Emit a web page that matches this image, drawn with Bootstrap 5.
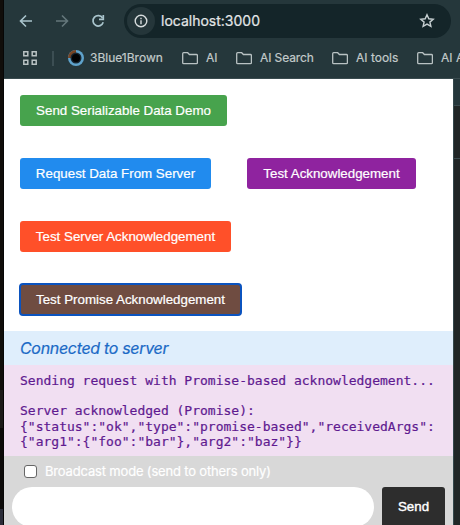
<!DOCTYPE html>
<html lang="en">
<head>
<meta charset="utf-8">
<meta name="viewport" content="width=device-width, initial-scale=1">
<title>localhost:3000</title>
<link href="https://cdn.jsdelivr.net/npm/bootstrap@5.3.0/dist/css/bootstrap.min.css" rel="stylesheet">
<style>
html, body { height: 525px; overflow: hidden; }
body { font-family: Inter, sans-serif; background: #25363a; }
.desk-left { width: 4px; height: 525px; background: linear-gradient(#100d0a 0 390px, #1c1a18 390px 428px, #0c0a09 428px 509px, #2a2c38 509px); border-right: 1px solid #060606; }
.browser { width: 456px; height: 525px; }
.chrome-head { height: 79px; background: #25373b; border-bottom: 1px solid #3a4b4f; color: #c7d0d2; }
.toolbar { height: 42px; padding-left: 14px; }
.nav-ico { width: 16px; height: 16px; margin-right: 20px; }
.nav-ico.last { margin-right: 18px; }
.address { width: 327px; height: 34px; background: #142529; padding-left: 3px; padding-right: 16px; }
.info-dot { width: 28px; height: 28px; background: #25363a; }
.url-text { font-size: 14px; line-height: 20px; color: #e3e6e7; margin-left: 6px; -webkit-text-stroke: .2px #e3e6e7; }
.bookmarks { height: 32px; padding-left: 19px; font-size: 12px; color: #c2caca; white-space: nowrap; -webkit-text-stroke: .2px #c2caca; }
.divider { width: 2px; height: 15px; background: #3c4e53; margin-left: 15px; margin-right: 14px; }
.folder { margin-right: 8px; }
.bm { flex-shrink: 0; }
.bm-first { width: 98px; padding-left: 6px; }
.bm-ai { width: 30px; }
.bm-search { width: 72px; letter-spacing: -.1px; }
.bm-tools { width: 61px; }
.page { width: 449px; height: 446px; background: #fff; }
.desk-right { width: 7px; height: 446px; background: linear-gradient(#25373b 0 26px, #3a4b4f 26px 27px, #202626 27px 79px, #3a4b4f 79px 80px, #202626 80px); border-left: 1px solid #34484c; }
.demo-buttons { height: 252px; padding: 16px 16px 0; row-gap: 32px; }
.pair { column-gap: 36px; }
.demo-btn { height: 31px; padding: 0; border: 0; border-radius: 3px; font: 13.333px/31px "Liberation Sans", Arial, sans-serif; color: #fff; text-align: center; white-space: nowrap; -webkit-text-stroke: .2px #fff; }
.demo-btn.green { width: 207px; background: #47a34d; }
.demo-btn.blue { width: 191px; background: #218bee; }
.demo-btn.purple { width: 169px; background: #8f239f; }
.demo-btn.orange { width: 211px; background: #ff5029; }
.demo-btn.brown { width: 221px; background: #6f4c41; outline: 2px solid #0b53bf; outline-offset: -1px; }
.status-line { height: 34px; padding: 0 16px; background: #dfeefc; color: #1b6ac6; font: italic 16px/34px Inter, sans-serif; letter-spacing: -.32px; -webkit-text-stroke: .2px #1b6ac6; }
.log { height: 91px; padding: 8px 16px 0; background: #f1dff2; color: #5f1a90; font: 13px/15.2px "DejaVu Sans Mono", monospace; white-space: pre; margin: 0; overflow: hidden; -webkit-text-stroke: .2px #5f1a90; }
.composer { height: 69px; background: #d8d8d8; }
.broadcast { height: 31px; padding-left: 20px; color: #fff; font-size: 13px; letter-spacing: -.17px; -webkit-text-stroke: .2px #fff; }
.broadcast input { width: 13px; height: 13px; margin: 0 8px 0 0; border: 1px solid #666; border-radius: 3px; background: #fff; appearance: none; }
.message-box { width: 362px; height: 40px; border: 0; border-radius: 20px; background: #fff; }
.send-btn { width: 63px; height: 40px; border: 0; border-radius: 3px; background: #2d2d2d; color: #fff; font: 13.333px/40px "Liberation Sans", Arial, sans-serif; padding: 0; -webkit-text-stroke: .4px #fff; }
</style>
</head>
<body class="d-flex m-0">
<div class="desk-left flex-shrink-0"></div>
<div class="browser flex-shrink-0">
  <header class="chrome-head overflow-hidden">
    <div class="toolbar d-flex align-items-center">
      <svg class="nav-ico flex-shrink-0" viewBox="0 0 16 16" fill="none" stroke="#a9c4cc" stroke-width="1.6"><path d="M14 8H3M8 2.5 2.5 8 8 13.5"/></svg>
      <svg class="nav-ico flex-shrink-0" viewBox="0 0 16 16" fill="none" stroke="#64777b" stroke-width="1.6"><path d="M2 8h11M8 2.5 13.5 8 8 13.5"/></svg>
      <svg class="nav-ico last flex-shrink-0" viewBox="0 0 16 16" fill="none" stroke="#a9c4cc" stroke-width="1.7"><path d="M12.6 5A5.2 5.2 0 1 0 13.2 9.3"/><path d="M13.3 2v4.3H9"/></svg>
      <div class="address rounded-pill d-flex align-items-center flex-shrink-0">
        <span class="info-dot rounded-circle d-flex align-items-center justify-content-center flex-shrink-0"><svg width="14" height="14" viewBox="0 0 14 14" fill="none" stroke="#d7dcdd" stroke-width="1.4"><circle cx="7" cy="7" r="5.8"/><path d="M7 6.3v3.9M7 3.8v1.4"/></svg></span>
        <span class="url-text">localhost:3000</span>
        <svg class="ms-auto" width="16" height="16" viewBox="0 0 16 16" fill="none" stroke="#c7d0d2" stroke-width="1.4"><path d="m8 1.8 1.8 4 4.4.4-3.3 2.9 1 4.3L8 11.1l-3.9 2.3 1-4.3-3.3-2.9 4.4-.4z"/></svg>
      </div>
    </div>
    <div class="bookmarks d-flex align-items-center">
      <svg class="flex-shrink-0" width="14" height="14" viewBox="0 0 14 14" fill="none" stroke="#b9c2c3" stroke-width="1.5"><path d="M.8.8h4v4h-4zM9.2.8h4v4h-4zM.8 9.2h4v4h-4zM9.2 9.2h4v4h-4z"/></svg>
      <span class="divider flex-shrink-0"></span>
      <svg class="flex-shrink-0" width="16" height="16" viewBox="0 0 16 16"><circle cx="8" cy="8" r="8" fill="#5fa3cc"/><path d="M8 8H0a8 8 0 0 1 8-8z" fill="#774525"/><circle cx="8" cy="8" r="5.5" fill="#17252f"/><circle cx="8" cy="8" r="4" fill="#020304"/></svg>
      <span class="bm bm-first">3Blue1Brown</span>
      <svg class="folder flex-shrink-0" width="16" height="13" viewBox="0 0 16 13" fill="none" stroke="#b9c2c3" stroke-width="1.3"><path d="M.7 1.7q0-1 1-1h4l1.7 1.8h7q1 0 1 1v7.2q0 1-1 1H1.7q-1 0-1-1z"/></svg><span class="bm bm-ai">AI</span>
      <svg class="folder flex-shrink-0" width="16" height="13" viewBox="0 0 16 13" fill="none" stroke="#b9c2c3" stroke-width="1.3"><path d="M.7 1.7q0-1 1-1h4l1.7 1.8h7q1 0 1 1v7.2q0 1-1 1H1.7q-1 0-1-1z"/></svg><span class="bm bm-search">AI Search</span>
      <svg class="folder flex-shrink-0" width="16" height="13" viewBox="0 0 16 13" fill="none" stroke="#b9c2c3" stroke-width="1.3"><path d="M.7 1.7q0-1 1-1h4l1.7 1.8h7q1 0 1 1v7.2q0 1-1 1H1.7q-1 0-1-1z"/></svg><span class="bm bm-tools">AI tools</span>
      <svg class="folder flex-shrink-0" width="16" height="13" viewBox="0 0 16 13" fill="none" stroke="#b9c2c3" stroke-width="1.3"><path d="M.7 1.7q0-1 1-1h4l1.7 1.8h7q1 0 1 1v7.2q0 1-1 1H1.7q-1 0-1-1z"/></svg><span class="bm">AI A</span>
    </div>
  </header>
  <div class="d-flex">
    <main class="page d-flex flex-column flex-shrink-0">
      <div class="demo-buttons d-flex flex-column align-items-start flex-shrink-0">
        <button class="demo-btn green">Send Serializable Data Demo</button>
        <div class="pair d-flex"><button class="demo-btn blue">Request Data From Server</button><button class="demo-btn purple">Test Acknowledgement</button></div>
        <button class="demo-btn orange">Test Server Acknowledgement</button>
        <button class="demo-btn brown">Test Promise Acknowledgement</button>
      </div>
      <div class="status-line flex-shrink-0">Connected to server</div>
      <pre class="log flex-shrink-0">Sending request with Promise-based acknowledgement...

Server acknowledged (Promise):
{"status":"ok","type":"promise-based","receivedArgs":
{"arg1":{"foo":"bar"},"arg2":"baz"}}</pre>
      <div class="composer flex-shrink-0">
        <label class="broadcast d-flex align-items-center"><input type="checkbox">Broadcast mode (send to others only)</label>
        <div class="d-flex px-2 gap-2"><input class="message-box" type="text" aria-label="Message"><button class="send-btn">Send</button></div>
      </div>
    </main>
    <div class="desk-right flex-shrink-0"></div>
  </div>
</div>
<script src="https://cdn.jsdelivr.net/npm/bootstrap@5.3.0/dist/js/bootstrap.bundle.min.js"></script>
</body>
</html>
